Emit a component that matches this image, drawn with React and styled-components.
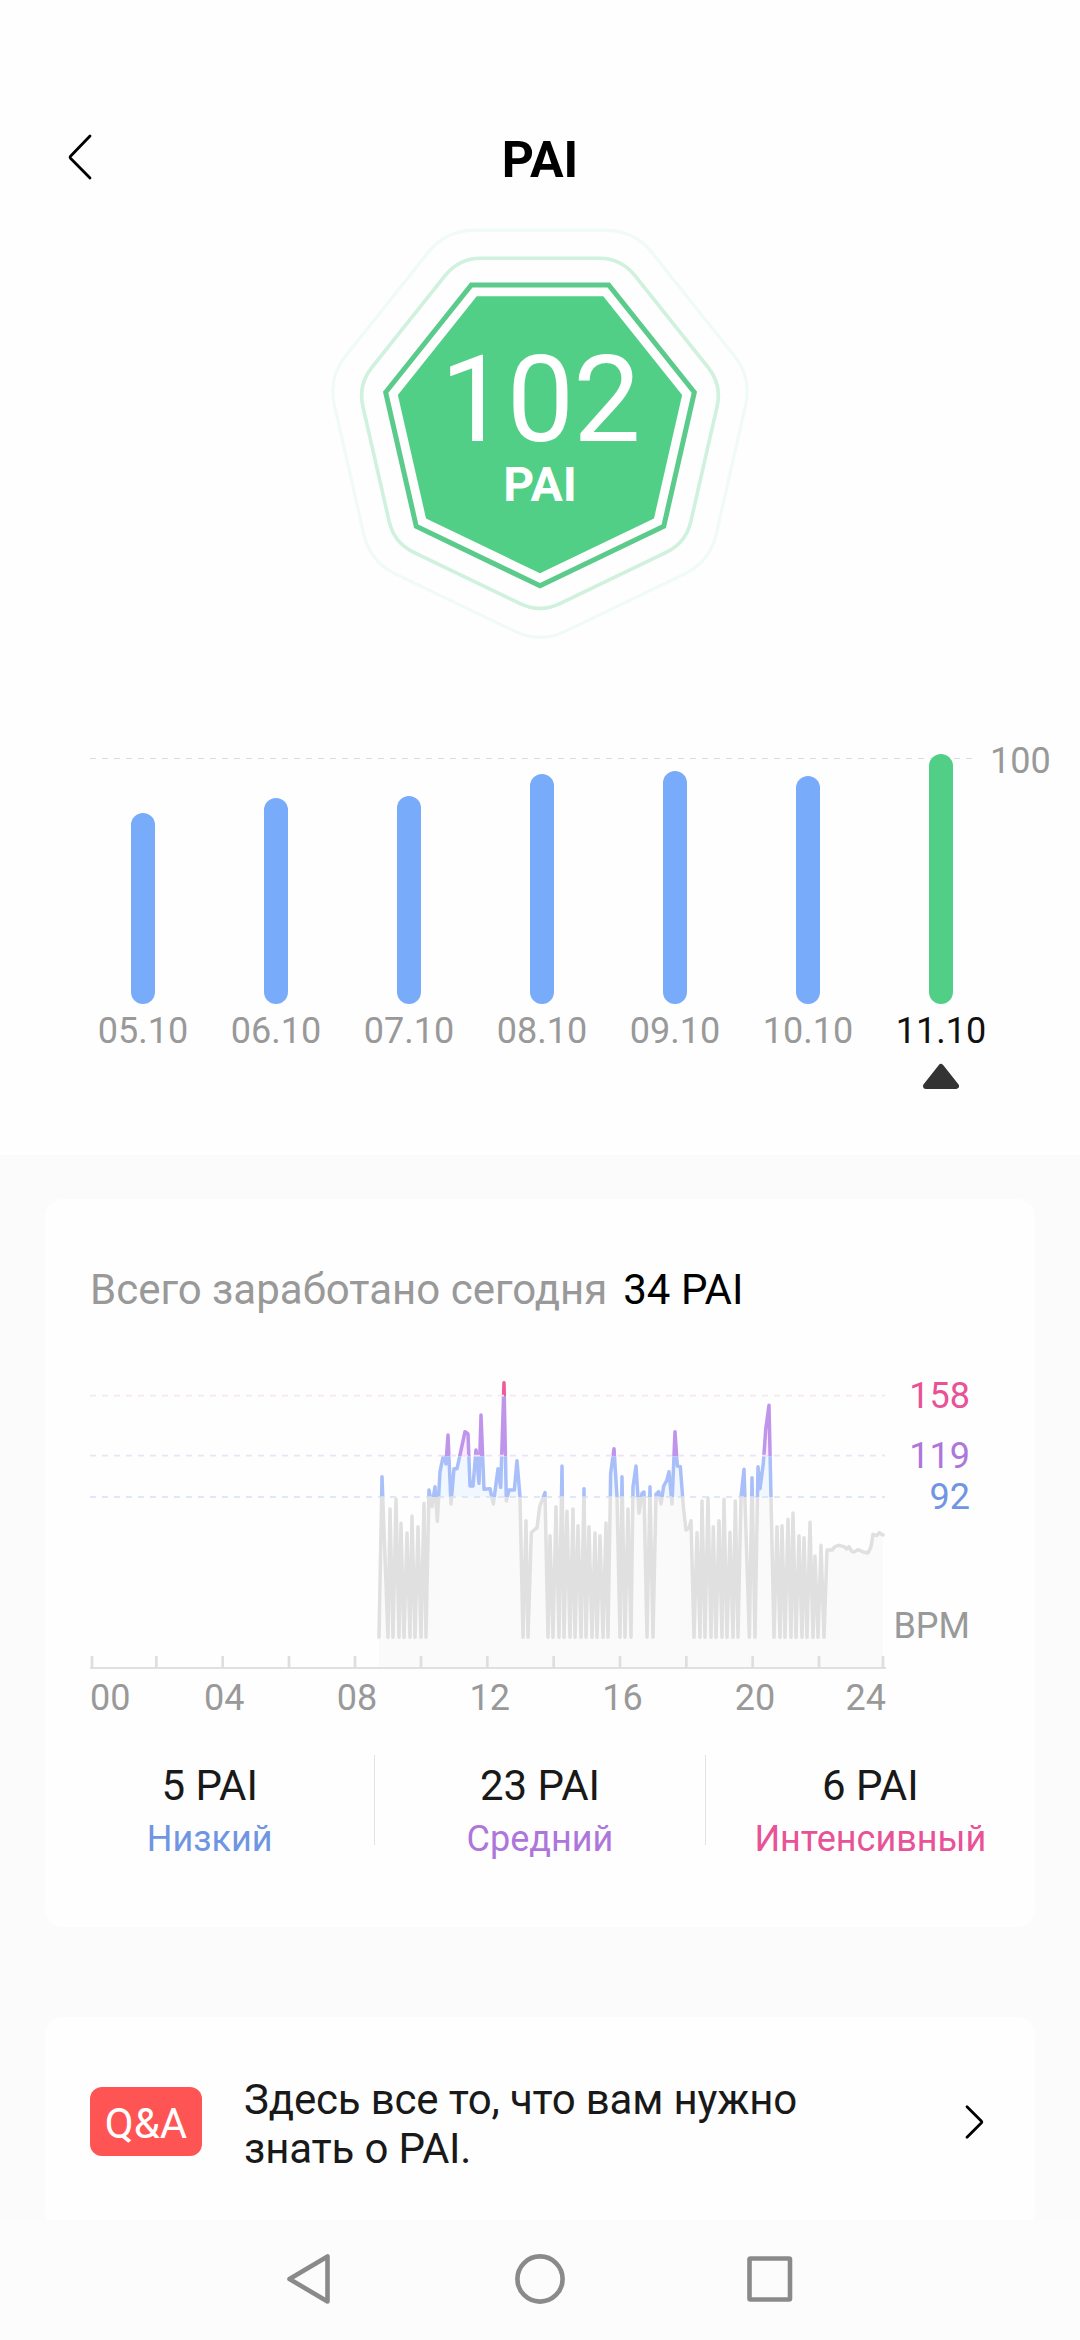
import React from "react";
import styled, { createGlobalStyle } from "styled-components";

const GlobalStyle = createGlobalStyle`
  * {
    box-sizing: border-box;
  }

  body {
    margin: 0;
    background: #fefefe;
    font-family: Roboto, "Liberation Sans", sans-serif;
  }
`;

const Screen = styled.div`
  display: flex;
  flex-direction: column;
  width: 1080px;
  height: 2340px;
  overflow: hidden;
  color: #191919;
`;

const Hero = styled.section`
  flex: none;
  height: 1155px;
  background: #fefefe;
`;

const Header = styled.header`
  display: grid;
  grid-template-columns: 140px 1fr 140px;
  align-items: center;
  height: 200px;
  padding-top: 120px;
`;

const BackButton = styled.button`
  display: flex;
  padding: 0 0 6px 66px;
  border: 0;
  background: none;
`;

const Title = styled.h1`
  margin: 0;
  font-size: 50px;
  font-weight: 700;
  line-height: 60px;
  text-align: center;
  color: #000;
`;

// PAI badge
const Badge = styled.div`
  display: grid;
  justify-content: center;
  margin-top: 25px;

  > * {
    grid-area: 1 / 1;
  }
`;

const BadgeText = styled.div`
  padding-top: 115px;
  text-align: center;
  color: #fff;
`;

const Score = styled.div`
  font-size: 120px;
  line-height: 120px;
  letter-spacing: -1px;
`;

const ScoreUnit = styled.div`
  font-size: 48px;
  font-weight: 700;
  line-height: 50px;
`;

// Weekly bars
const Week = styled.div`
  position: relative;
  display: flex;
  margin-top: 109px;
  padding-left: 76.5px;
`;

const Limit = styled.div`
  position: absolute;
  top: -14px;
  left: 90px;
  display: flex;
  align-items: center;
  font-size: 36px;
  line-height: 42px;
  color: #999;
`;

const LimitLine = styled.div`
  width: 885px;
  height: 1px;
  margin: 0 15px 5px 0;
  background: repeating-linear-gradient(
    90deg,
    #dcdcdc 0 6px,
    transparent 6px 12px
  );
`;

const Day = styled.div`
  position: relative;
  display: flex;
  flex-direction: column;
  align-items: center;
  width: 133px;
  font-size: 36px;
  line-height: 42px;
  color: ${({ $active }) => ($active ? "#111" : "#999")};
`;

const BarTrack = styled.div`
  display: flex;
  align-items: flex-end;
  height: 250px;
  margin-bottom: 6px;
`;

const Bar = styled.div`
  width: 24px;
  border-radius: 12px;
  background: ${({ $active }) => ($active ? "#52cf87" : "#78abf9")};
`;

const Marker = styled.svg`
  margin-top: 11px;
`;

// Cards
const Details = styled.main`
  flex: 1;
  display: flex;
  flex-direction: column;
  gap: 90px;
  min-height: 0;
  padding: 44px 45px 0;
  overflow: hidden;
  background: #fbfbfb;
`;

const Card = styled.section`
  flex: none;
  height: ${({ $height }) => $height}px;
  border-radius: 18px;
  background: #fefefe;
`;

const Earned = styled.h2`
  margin: 0;
  padding: 66px 45px 0;
  font-size: 42px;
  font-weight: 400;
  line-height: 50px;
  color: #999;

  span {
    margin-left: 16px;
    color: #000;
  }
`;

const ChartRow = styled.div`
  display: flex;
  height: 300px;
  margin-top: 55px;
  padding-left: 45px;
`;

const Zones = styled.div`
  width: 84px;
  padding-top: 5px;
  font-size: 36px;
  line-height: 42px;
  text-align: right;
`;

const Zone = styled.div`
  margin-bottom: ${({ $space }) => $space}px;
  margin-left: -10px;
  color: ${({ $color }) => $color};
`;

const Hours = styled.div`
  display: grid;
  grid-template-columns: 68px repeat(5, 132.7px) 64.5px;
  margin: 7px 0 0 45px;
  font-size: 36px;
  line-height: 42px;
  text-align: center;
  color: #999;

  span:first-child {
    text-align: left;
  }

  span:last-child {
    text-align: right;
  }
`;

const Stats = styled.div`
  display: flex;
  margin-top: 36px;
`;

const Stat = styled.div`
  flex: 1;
  padding-top: 6px;
  text-align: center;
  font-size: 42px;
  line-height: 50px;
`;

const StatLabel = styled.div`
  margin-top: 7px;
  font-size: 36px;
  line-height: 42px;
  color: ${({ $color }) => $color};
`;

const Divider = styled.div`
  width: 1px;
  height: 90px;
  background: #e2e2e2;
`;

const Faq = styled.a`
  display: flex;
  align-items: flex-start;
  padding: 58px 49px 0 45px;
`;

const FaqBadge = styled.div`
  width: 112px;
  height: 69px;
  margin: 12px 42px 0 0;
  border-radius: 12px;
  background: #ff5454;
  font-size: 42px;
  line-height: 74px;
  text-align: center;
  color: #fff;
`;

const FaqText = styled.p`
  flex: 1;
  max-width: 600px;
  margin: 0;
  font-size: 42px;
  line-height: 49px;
  letter-spacing: -0.18px;
`;

const FaqArrow = styled.svg`
  margin: 27px 0 0 auto;
`;

const NavBar = styled.nav`
  flex: none;
  display: flex;
  justify-content: center;
  align-items: center;
  gap: 170px;
  height: 120px;
  padding-bottom: 2px;
  background: #fcfcfc;

  svg {
    width: 60px;
    height: 60px;
    fill: none;
    stroke: #8a8a8a;
    stroke-width: 4.6;
    stroke-linejoin: round;
  }
`;

const days = [
  { date: "05.10", height: 191 },
  { date: "06.10", height: 206 },
  { date: "07.10", height: 208 },
  { date: "08.10", height: 230 },
  { date: "09.10", height: 233 },
  { date: "10.10", height: 228 },
  { date: "11.10", height: 250, active: true },
];

const hours = ["00", "04", "08", "12", "16", "20", "24"];

const zones = [
  { value: "158", color: "#e85296", space: 18 },
  { value: "119", color: "#ad76da", space: -1 },
  { value: "92", color: "#7095e2", space: 87 },
  { value: "BPM", color: "#999", space: 0 },
];

// Heart rate trace, three units per pixel, y pointing down
const trace = [
  [57, 832], [66, 350], [84, 832], [90, 447], [99, 832], [108, 418],
  [117, 832], [123, 490], [132, 832], [141, 519], [150, 832], [156, 468],
  [165, 832], [174, 500], [183, 832], [192, 430], [198, 832], [207, 390],
  [216, 440], [225, 380], [232, 484], [240, 335], [249, 292], [255, 292],
  [258, 312], [264, 225], [273, 432], [282, 326], [291, 326], [300, 285],
  [315, 215], [324, 222], [330, 378], [339, 378], [348, 270], [357, 370],
  [363, 165], [372, 388], [390, 386], [400, 432], [414, 326], [422, 382],
  [432, 68], [439, 423], [447, 390], [463, 390], [471, 302], [480, 411],
  [489, 832], [498, 482], [504, 832], [514, 518], [531, 503], [539, 440],
  [555, 398], [564, 832], [570, 527], [579, 832], [588, 440], [597, 832],
  [606, 318], [612, 832], [621, 454], [630, 832], [639, 447], [645, 832],
  [654, 497], [663, 832], [672, 386], [678, 832], [687, 500], [696, 832],
  [705, 519], [711, 832], [720, 527], [729, 832], [738, 489], [744, 832],
  [752, 340], [762, 266], [771, 411], [780, 832], [786, 350], [795, 832],
  [804, 447], [813, 832], [819, 380], [828, 318], [837, 460], [846, 400],
  [852, 396], [861, 832], [870, 380], [879, 832], [888, 403], [896, 395],
  [903, 432], [911, 378], [920, 362], [927, 335], [936, 432], [945, 215],
  [952, 318], [961, 320], [970, 440], [978, 510], [987, 505], [993, 482],
  [1002, 832], [1011, 518], [1020, 832], [1026, 423], [1035, 832],
  [1044, 415], [1053, 832], [1060, 500], [1068, 832], [1077, 482],
  [1086, 832], [1092, 418], [1101, 832], [1110, 517], [1119, 832],
  [1126, 423], [1134, 832], [1143, 411], [1152, 328], [1168, 832],
  [1176, 353], [1185, 832], [1194, 320], [1200, 386], [1210, 310],
  [1217, 210], [1227, 136], [1242, 832], [1251, 500], [1260, 832],
  [1266, 497], [1275, 832], [1284, 478], [1293, 832], [1299, 459],
  [1308, 832], [1317, 527], [1326, 832], [1332, 533], [1341, 832],
  [1350, 487], [1359, 832], [1365, 588], [1374, 832], [1383, 556],
  [1392, 832], [1401, 570], [1416, 570], [1425, 560], [1437, 556],
  [1452, 560], [1460, 567], [1467, 560], [1474, 573], [1482, 576],
  [1494, 569], [1510, 576], [1524, 579], [1533, 560], [1539, 523],
  [1550, 527], [1558, 518], [1569, 525],
];

const bands = [
  { id: "rest", top: 411, bottom: 924, stroke: "#e0e0e0", fill: "#fafafa" },
  { id: "low", top: 289, bottom: 411, stroke: "#a9bff9", fill: "#f1f7ff" },
  { id: "mid", top: 108, bottom: 289, stroke: "#bf95ec", fill: "#fbeafd" },
  { id: "high", top: 30, bottom: 108, stroke: "#ee5b97", fill: "#fde4ee" },
];

const limits = [
  { y: 107, color: "#f5e8ef" },
  { y: 287, color: "#efe1f6" },
  { y: 411, color: "#d6e0f4" },
];

const ticks = [6, 199, 398, 597, 795, 993, 1192, 1391, 1590, 1789, 1988, 2187, 2379];

// Regular heptagon standing on its vertex
const heptagon = (radius, centerY = 202.5) =>
  Array.from({ length: 7 }, (_, i) => {
    const angle = (i * 2 * Math.PI) / 7;
    return [
      220 + radius * Math.sin(angle),
      centerY + radius * Math.cos(angle),
    ];
  });

const toward = ([x1, y1], [x2, y2], distance) => {
  const k = distance / Math.hypot(x2 - x1, y2 - y1);
  return [x1 + (x2 - x1) * k, y1 + (y2 - y1) * k];
};

const roundedPath = (points, cut) =>
  points
    .map((point, i) => {
      const before = toward(point, points.at(i - 1), cut);
      const after = toward(point, points[(i + 1) % points.length], cut);
      return `${i ? "L" : "M"}${before} Q${point} ${after}`;
    })
    .join(" ") + "Z";

const PaiBadge = () => (
  <Badge>
    <svg width="440" height="420" fill="none">
      <path d={roundedPath(heptagon(217.3, 201.2), 28)} stroke="#f0fbf5" strokeWidth="3.2" />
      <path d={roundedPath(heptagon(186.7, 201.4), 22)} stroke="#cff1de" strokeWidth="3.6" />
      <polygon points={heptagon(158.3).join(" ")} stroke="#5bcb8c" strokeWidth="5" />
      <polygon points={heptagon(145.8).join(" ")} fill="#52cf87" />
    </svg>
    <BadgeText>
      <Score>102</Score>
      <ScoreUnit>PAI</ScoreUnit>
    </BadgeText>
  </Badge>
);

const HeartChart = () => {
  const line = trace.join(" ");
  const area = `57,924 ${line} 1569,924`;

  return (
    <svg width="796" height="300" viewBox="0 0 2388 900">
      <g transform="translate(810 -30)">
        {bands.map(({ id, top, bottom, stroke, fill }) => (
          <g key={id} clipPath={`url(#${id})`}>
            <clipPath id={id}>
              <rect x="0" y={top} width="1600" height={bottom - top} />
            </clipPath>
            <polygon points={area} fill={fill} />
            <polyline
              points={line}
              fill="none"
              stroke={stroke}
              strokeWidth="10.5"
              strokeLinecap="round"
              strokeLinejoin="round"
            />
          </g>
        ))}
      </g>
      <g transform="translate(0 -30)" strokeWidth="5">
        {limits.map(({ y, color }) => (
          <path key={y} d={`M0 ${y}H2385`} stroke={color} strokeDasharray="18 18" />
        ))}
        <path d="M0 924H2388" stroke="#e0e0e0" strokeWidth="6" />
        {ticks.map((x) => (
          <path key={x} d={`M${x} 888V924`} stroke="#dedede" strokeWidth="8" />
        ))}
      </g>
    </svg>
  );
};

const App = () => (
  <>
    <GlobalStyle />
    <Screen>
      <Hero>
        <Header>
          <BackButton aria-label="Назад">
            <svg width="28" height="48" fill="none" stroke="#000" strokeWidth="2.8" strokeLinecap="round" strokeLinejoin="round">
              <path d="M24 3 L4.5 23.2 Q3.6 24.2 4.5 25.2 L24 45" />
            </svg>
          </BackButton>
          <Title>PAI</Title>
        </Header>
        <PaiBadge />
        <Week>
          <Limit>
            <LimitLine />
            100
          </Limit>
          {days.map(({ date, height, active }) => (
            <Day key={date} $active={active}>
              <BarTrack>
                <Bar $active={active} style={{ height }} />
              </BarTrack>
              {date}
              {active && (
                <Marker width="36" height="26" fill="#333" stroke="#333" strokeWidth="6" strokeLinejoin="round">
                  <path d="M18 4 L33 23 H3 Z" />
                </Marker>
              )}
            </Day>
          ))}
        </Week>
      </Hero>

      <Details>
        <Card $height={728}>
          <Earned>
            Всего заработано сегодня<span>34 PAI</span>
          </Earned>
          <ChartRow>
            <HeartChart />
            <Zones>
              {zones.map(({ value, color, space }) => (
                <Zone key={value} $color={color} $space={space}>
                  {value}
                </Zone>
              ))}
            </Zones>
          </ChartRow>
          <Hours>
            {hours.map((hour) => (
              <span key={hour}>{hour}</span>
            ))}
          </Hours>
          <Stats>
            <Stat>
              5 PAI
              <StatLabel $color="#7095e2">Низкий</StatLabel>
            </Stat>
            <Divider />
            <Stat>
              23 PAI
              <StatLabel $color="#ad76da">Средний</StatLabel>
            </Stat>
            <Divider />
            <Stat>
              6 PAI
              <StatLabel $color="#e85296">Интенсивный</StatLabel>
            </Stat>
          </Stats>
        </Card>

        <Card $height={214}>
          <Faq>
            <FaqBadge>Q&amp;A</FaqBadge>
            <FaqText>Здесь все то, что вам нужно знать о PAI.</FaqText>
            <FaqArrow width="24" height="40" fill="none" stroke="#000" strokeWidth="2.8" strokeLinecap="round" strokeLinejoin="round">
              <path d="M5 4.8 L19.5 19.3 Q20.2 20 19.5 20.7 L5 35.2" />
            </FaqArrow>
          </Faq>
        </Card>
      </Details>

      <NavBar>
        <svg>
          <path d="M47.5 7.5 V52.5 L9.5 30 Z" />
        </svg>
        <svg>
          <circle cx="30" cy="30" r="22.6" />
        </svg>
        <svg>
          <rect x="9.5" y="9.5" width="40.5" height="41" rx="1" />
        </svg>
      </NavBar>
    </Screen>
  </>
);

export default App;
